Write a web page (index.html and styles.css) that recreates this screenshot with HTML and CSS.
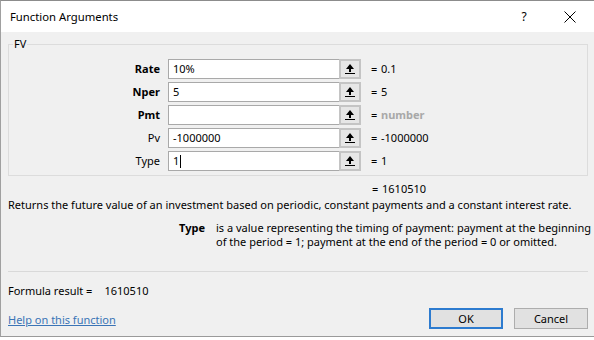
FILE: index.html
```html
<!DOCTYPE html>
<html lang="en">
<head>
    <meta charset="UTF-8">
    <meta name="viewport" content="width=device-width, initial-scale=1.0">
    <title>Function Arguments</title>
    <link rel="stylesheet" href="styles.css">
</head>
<body>
    <div class="dialog">
        <div class="titlebar">
            <span class="title">Function Arguments</span>
            <span class="help-btn">?</span>
            <span class="close-btn">
                <svg width="12" height="12" viewBox="0 0 12 12"><path d="M0.5 0.5 L11.5 11.5 M11.5 0.5 L0.5 11.5" stroke="#000" stroke-width="1" fill="none"/></svg>
            </span>
        </div>

        <div class="content">
            <fieldset class="group">
                <legend>FV</legend>
                <div class="args">
                    <div class="arg-name bold">Rate</div>
                    <div class="arg-input">10%</div>
                    <div class="ref-btn"><svg width="10" height="12" viewBox="0 0 10 12"><path d="M5 1 L9 6 L6 6 L6 9 L4 9 L4 6 L1 6 Z" fill="#000"/><rect x="0" y="10" width="10" height="1" fill="#000"/></svg></div>
                    <div class="arg-value"><span class="eq">=</span>0.1</div>

                    <div class="arg-name bold">Nper</div>
                    <div class="arg-input">5</div>
                    <div class="ref-btn"><svg width="10" height="12" viewBox="0 0 10 12"><path d="M5 1 L9 6 L6 6 L6 9 L4 9 L4 6 L1 6 Z" fill="#000"/><rect x="0" y="10" width="10" height="1" fill="#000"/></svg></div>
                    <div class="arg-value"><span class="eq">=</span>5</div>

                    <div class="arg-name bold">Pmt</div>
                    <div class="arg-input"></div>
                    <div class="ref-btn"><svg width="10" height="12" viewBox="0 0 10 12"><path d="M5 1 L9 6 L6 6 L6 9 L4 9 L4 6 L1 6 Z" fill="#000"/><rect x="0" y="10" width="10" height="1" fill="#000"/></svg></div>
                    <div class="arg-value"><span class="eq">=</span><span class="hint">number</span></div>

                    <div class="arg-name">Pv</div>
                    <div class="arg-input">-1000000</div>
                    <div class="ref-btn"><svg width="10" height="12" viewBox="0 0 10 12"><path d="M5 1 L9 6 L6 6 L6 9 L4 9 L4 6 L1 6 Z" fill="#000"/><rect x="0" y="10" width="10" height="1" fill="#000"/></svg></div>
                    <div class="arg-value"><span class="eq">=</span>-1000000</div>

                    <div class="arg-name">Type</div>
                    <div class="arg-input">1<span class="caret"></span></div>
                    <div class="ref-btn"><svg width="10" height="12" viewBox="0 0 10 12"><path d="M5 1 L9 6 L6 6 L6 9 L4 9 L4 6 L1 6 Z" fill="#000"/><rect x="0" y="10" width="10" height="1" fill="#000"/></svg></div>
                    <div class="arg-value"><span class="eq">=</span>1</div>
                </div>
            </fieldset>

            <div class="result-row"><span class="eq">=</span>1610510</div>
            <div class="description">Returns the future value of an investment based on periodic, constant payments and a constant interest rate.</div>

            <div class="arg-help">
                <div class="arg-help-name">Type</div>
                <div class="arg-help-text">is a value representing the timing of payment: payment at the beginning<br>of the period = 1; payment at the end of the period = 0 or omitted.</div>
            </div>

            <div class="separator"></div>

            <div class="formula-result">Formula result =<span class="formula-value">1610510</span></div>

            <div class="footer">
                <a class="help-link" href="#">Help on this function</a>
                <div class="buttons">
                    <button class="btn btn-default">OK</button>
                    <button class="btn">Cancel</button>
                </div>
            </div>
        </div>
    </div>
</body>
</html>
```
FILE: styles.css
```css
/* Excel style function dialog */
body {
    margin: 0;
    background: #ffffff;
    font-family: "Noto Sans", sans-serif;
    font-size: 11px;
    color: #000000;
}

.dialog {
    width: 594px;
    height: 337px;
    box-sizing: border-box;
    background: #f0f0f0;
    border-top: 1px solid #8c8c8c;
    border-left: 1px solid #a0a0a0;
    border-bottom: 1px solid #9a9a9a;
}

.titlebar {
    height: 31px;
    background: #ffffff;
    display: flex;
    align-items: center;
    padding-left: 9px;
}

.title {
    font-size: 11.3px;
    flex: 1;
}

.help-btn {
    font-size: 12px;
    width: 46px;
    text-align: center;
}

.close-btn {
    width: 46px;
    display: flex;
    justify-content: center;
    margin-right: 1px;
}

.content {
    padding: 0 6px 0 7px;
}

.group {
    margin: 4px 0 0 0;
    padding: 7px 0 4px 0;
    border: 1px solid #dcdcdc;
    min-width: 0;
}

.group legend {
    margin-left: 4px;
    padding: 0 1px;
    line-height: 16px;
}

.args {
    display: grid;
    grid-template-columns: 159px 171px 22px 1fr;
    grid-auto-rows: 20px;
    row-gap: 3px;
}

.arg-name {
    text-align: right;
    padding-right: 8px;
    line-height: 20px;
}

.bold {
    font-weight: bold;
}

.arg-input {
    background: #ffffff;
    border: 1px solid #a9a9a9;
    border-right: none;
    line-height: 18px;
    padding-left: 4px;
    display: flex;
    align-items: center;
}

.caret {
    display: inline-block;
    width: 1px;
    height: 13px;
    background: #000000;
    margin-left: 1px;
}

.ref-btn {
    background: #e6e6e6;
    border: 2px solid #c4c4c4;
    box-sizing: border-box;
    display: flex;
    align-items: center;
    justify-content: center;
}

.arg-value {
    padding-left: 10px;
    line-height: 20px;
}

.eq {
    display: inline-block;
    width: 10px;
}

.hint {
    color: #a8a8a8;
    font-weight: bold;
}

.result-row {
    margin-top: 5px;
    padding-left: 364px;
    line-height: 16px;
}

.description {
    line-height: 16px;
    white-space: nowrap;
}

.arg-help {
    display: grid;
    grid-template-columns: 197px 1fr;
    column-gap: 11px;
    margin-top: 8px;
    line-height: 14px;
    white-space: nowrap;
}

.arg-help-name {
    text-align: right;
    font-weight: bold;
}

.separator {
    height: 1px;
    background: #d9d9d9;
    margin-top: 22px;
}

.formula-result {
    margin-top: 11px;
    line-height: 16px;
}

.formula-value {
    margin-left: 12px;
}

.footer {
    display: flex;
    justify-content: space-between;
    align-items: flex-end;
    margin-top: 9px;
}

.help-link {
    color: #3a74b6;
    text-decoration: underline;
    line-height: 16px;
    margin-bottom: 1px;
}

.buttons {
    display: flex;
    gap: 11px;
}

.btn {
    width: 74px;
    height: 21px;
    font-family: "Noto Sans", sans-serif;
    font-size: 11px;
    background: #e1e1e1;
    border: 1px solid #adadad;
    padding: 0;
    color: #000000;
}

.btn-default {
    border: 2px solid #2d7bcf;
}
```
